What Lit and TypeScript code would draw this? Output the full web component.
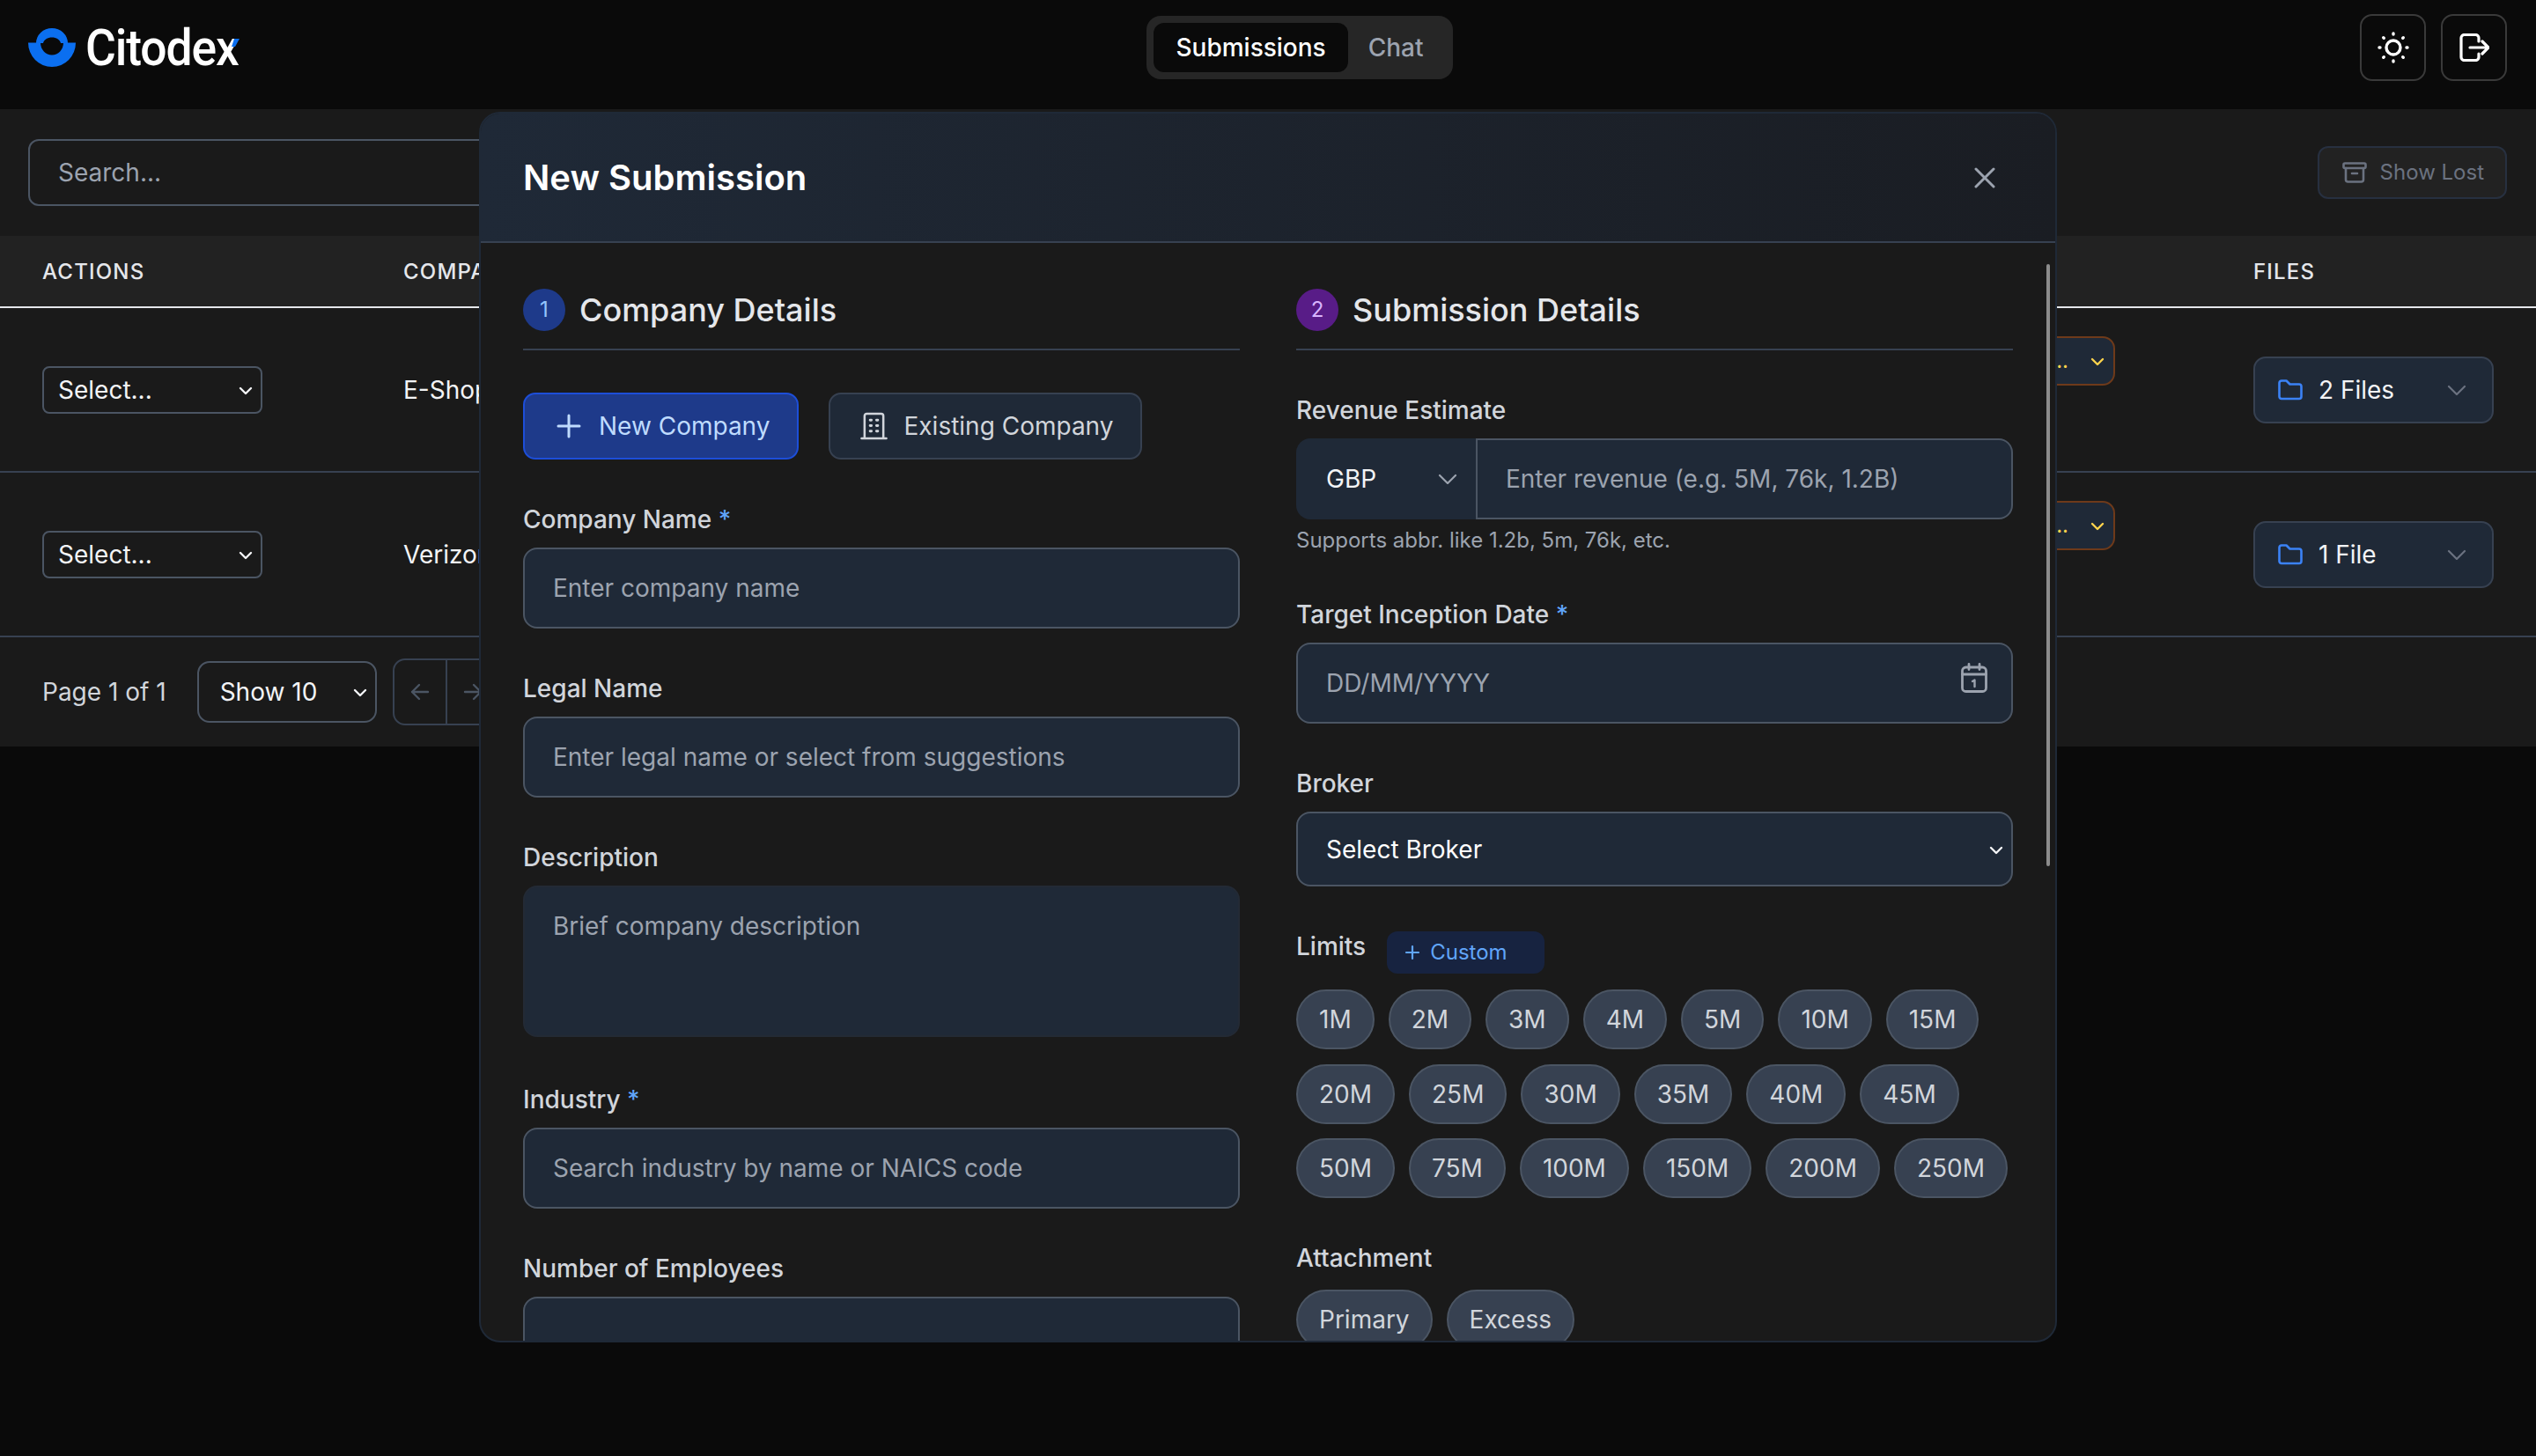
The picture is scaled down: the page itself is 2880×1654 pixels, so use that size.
import { css, html, LitElement } from "lit";
import { customElement } from "lit/decorators.js";

const chevron = html`<svg class="chev" viewBox="0 0 16 10" fill="none" stroke="currentColor" stroke-width="2.4" stroke-linecap="round" stroke-linejoin="round"><path d="M2 2l6 6 6-6" /></svg>`;
const wideChev = html`<svg class="wide-chev" viewBox="0 0 22 12" fill="none" stroke="currentColor" stroke-width="2.2" stroke-linecap="round" stroke-linejoin="round"><path d="M2 2l9 9 9-9" /></svg>`;
const folder = html`<svg class="folder" viewBox="0 0 28 24" fill="none" stroke="currentColor" stroke-width="2.6" stroke-linejoin="round"><path d="M1.5 4a2.5 2.5 0 0 1 2.5-2.5h5.5l4 4H24a2.5 2.5 0 0 1 2.5 2.5v11.500a2.500 2.500 0 0 1-2.500 2.500H4a2.500 2.500 0 0 1-2.500-2.500z" /></svg>`;

const LIMITS = ["1M", "2M", "3M", "4M", "5M", "10M", "15M", "20M", "25M", "30M", "35M", "40M", "45M", "50M", "75M", "100M", "150M", "200M", "250M"];

@customElement("app-root")
export class AppRoot extends LitElement {
    static styles = css`
        :host {
            display: block;
            min-height: 1654px;
            background: #0a0a0a;
            color: #f3f4f6;
            font-family: Inter, "Noto Sans", sans-serif;
            font-size: 28px;
            line-height: 40px;
            position: relative;
            overflow: hidden;
        }

        * {
            box-sizing: border-box;
        }

        select,
        input,
        textarea {
            font: inherit;
            color: inherit;
            appearance: none;
            outline: none;
            margin: 0;
        }

        input::placeholder,
        textarea::placeholder {
            color: #9ca3af;
            opacity: 1;
        }

        svg {
            display: block;
            flex: none;
        }

        /* top bar */
        .topbar {
            height: 124px;
            padding: 0 33px 16px 32px;
            display: flex;
            align-items: center;
            justify-content: space-between;
        }

        .logo {
            position: relative;
            display: flex;
            align-items: center;
            gap: 11px;
            width: 240px;
            height: 60px;
        }

        .logo svg {
            width: 54px;
            height: 44px;
        }

        .logo-text {
            font-family: Roboto, sans-serif;
            font-size: 58px;
            font-weight: 500;
            line-height: 60px;
            letter-spacing: -1.2px;
            color: #fff;
            transform: scaleX(0.92);
            transform-origin: left center;
        }

        .logo .tick {
            position: absolute;
            left: 231px;
            top: 20px;
            width: 9px;
            height: 9px;
        }

        .tabs {
            display: flex;
            padding: 8px;
            border-radius: 16px;
            background: #262626;
        }

        .tab {
            padding: 8px 25px 8px 23px;
            color: #9ca3af;
            font-weight: 500;
            border-radius: 12px;
        }

        .tab.on {
            padding: 8px 25px;
            color: #fff;
            background: #0a0a0a;
        }

        .top-actions {
            display: flex;
            gap: 17px;
        }

        .icon-btn {
            width: 75px;
            height: 76px;
            border: 2px solid #3a3a3a;
            border-radius: 14px;
            display: flex;
            align-items: center;
            justify-content: center;
            color: #fff;
        }

        /* list panel */
        .panel {
            background: #1a1a1a;
            height: 724px;
        }

        .filters {
            height: 144px;
            padding: 0 33px 0 32px;
            display: flex;
            align-items: center;
            justify-content: space-between;
        }

        .search {
            width: 1000px;
            height: 76px;
            padding: 0 32px;
            background: transparent;
            border: 2px solid #4b5563;
            border-radius: 12px;
        }

        .show-lost {
            height: 60px;
            padding: 0 24px 0 26px;
            display: flex;
            align-items: center;
            gap: 15px;
            font-size: 24px;
            color: #6b7280;
            background: #222;
            border: 2px solid #273040;
            border-radius: 12px;
        }

        .table-head,
        .table-row {
            display: grid;
            grid-template-columns: 410px 1fr 273px;
            padding: 0 48px;
        }

        .table-head {
            height: 82px;
            padding-top: 2px;
            align-items: center;
            background: #222;
            border-bottom: 2px solid #e5e7eb;
            font-size: 24px;
            font-weight: 500;
            letter-spacing: 1.2px;
            color: #e5e7eb;
        }

        .table-row {
            height: 187px;
            align-items: center;
            border-bottom: 2px solid #374151;
        }

        .select-wrap {
            position: relative;
            display: block;
        }

        .select-wrap .chev {
            position: absolute;
            right: 11px;
            top: 50%;
            width: 16px;
            height: 10px;
            margin-top: -4px;
            pointer-events: none;
        }

        .row-select {
            width: 250px;
        }

        .row-select select {
            display: block;
            width: 100%;
            height: 54px;
            padding: 0 16px;
            background: transparent;
            border: 2px solid #4b5563;
            border-radius: 8px;
        }

        .company {
            height: 100%;
            display: flex;
            align-items: center;
            justify-content: space-between;
            margin-right: 157px;
        }

        .status {
            align-self: flex-start;
            margin-top: 32px;
            width: 200px;
            height: 56px;
            padding-right: 51px;
            display: flex;
            align-items: center;
            justify-content: flex-end;
            position: relative;
            font-size: 24px;
            color: #fcd34d;
            background: #1f2937;
            border: 2px solid #6e3a1a;
            border-radius: 14px;
        }

        .status .chev {
            position: absolute;
            right: 10px;
            top: 22px;
            width: 16px;
            height: 10px;
        }

        .files {
            height: 76px;
            padding: 0 29px 0 26px;
            display: flex;
            align-items: center;
            background: #1f2937;
            border: 2px solid #374151;
            border-radius: 14px;
        }

        .folder {
            width: 28px;
            height: 24px;
            color: #3b82f6;
            margin-right: 18px;
        }

        .files .wide-chev {
            margin-left: auto;
            color: #6b7280;
        }

        .wide-chev {
            width: 22px;
            height: 12px;
        }

        .pagination {
            height: 124px;
            padding: 0 0 0 48px;
            display: flex;
            align-items: center;
        }

        .page-label {
            color: #d1d5db;
            margin-right: 35px;
        }

        .show-select {
            width: 204px;
        }

        .show-select select {
            display: block;
            width: 100%;
            height: 70px;
            padding: 0 24px;
            background: transparent;
            border: 2px solid #4b5563;
            border-radius: 14px;
        }

        .pager {
            margin-left: 18px;
            display: flex;
            height: 76px;
            width: 122px;
            border: 2px solid #374151;
            border-radius: 14px;
            color: #4b5563;
        }

        .pager span {
            flex: 1;
            display: flex;
            align-items: center;
            justify-content: center;
        }

        .pager span + span {
            border-left: 2px solid #374151;
        }

        /* modal */
        .modal {
            position: absolute;
            left: 544px;
            top: 127px;
            width: 1792px;
            height: 1398px;
            display: flex;
            flex-direction: column;
            overflow: hidden;
            background: #1a1a1a;
            border: 2px solid #1f2937;
            border-radius: 24px;
        }

        .modal-head {
            flex: none;
            height: 147px;
            padding: 0 48px;
            display: flex;
            align-items: center;
            justify-content: space-between;
            background: linear-gradient(to right, #1f2937, #1a1d23);
            border-bottom: 2px solid #374151;
        }

        .modal-head h2 {
            margin: 0;
            font-size: 40px;
            line-height: 56px;
            font-weight: 600;
            color: #fff;
        }

        .close {
            margin-right: 20px;
            color: #9ca3af;
        }

        .modal-body {
            flex: 1;
            min-height: 0;
            overflow: hidden;
            padding: 48px;
            display: grid;
            grid-template-columns: 1fr 1fr;
            column-gap: 64px;
            align-items: start;
        }

        .thumb {
            position: absolute;
            right: 6px;
            top: 171px;
            width: 4px;
            height: 684px;
            border-radius: 2px;
            background: #8c8c8c;
        }

        .step-head {
            display: flex;
            align-items: center;
            gap: 16px;
            padding-bottom: 16px;
            margin-bottom: 48px;
            border-bottom: 2px solid #374151;
        }

        .step-head h3 {
            margin: 0;
            font-size: 36px;
            line-height: 56px;
            font-weight: 500;
            color: #e5e7eb;
        }

        .step {
            width: 48px;
            height: 48px;
            border-radius: 50%;
            display: flex;
            align-items: center;
            justify-content: center;
            font-size: 24px;
            color: #93c5fd;
            background: #1e3a8a;
        }

        .step.purple {
            color: #d8b4fe;
            background: #581c87;
        }

        .mode {
            display: flex;
            gap: 34px;
            margin-bottom: 48px;
        }

        .mode-btn {
            height: 76px;
            padding: 0 31px 0 34px;
            display: flex;
            align-items: center;
            gap: 18px;
            color: #d1d5db;
            background: #1f2937;
            border: 2px solid #374151;
            border-radius: 14px;
        }

        .mode-btn.on {
            color: #bfdbfe;
            background: #1e3a8a;
            border-color: #1d4ed8;
        }

        .field {
            margin-bottom: 48px;
        }

        label,
        .label {
            display: block;
            margin-bottom: 12px;
            font-weight: 500;
            color: #d1d5db;
        }

        .req {
            color: #60a5fa;
        }

        .input {
            display: block;
            width: 100%;
            height: 92px;
            padding: 0 32px;
            background: #1f2937;
            border: 2px solid #4b5563;
            border-radius: 16px;
        }

        textarea.input {
            height: 172px;
            padding: 24px 32px;
            resize: none;
            border-color: #232a35;
            margin-bottom: 51px;
        }

        .field.desc {
            margin-bottom: 0;
        }

        .revenue {
            position: relative;
            display: flex;
            height: 92px;
        }

        .revenue select {
            width: 204px;
            height: 100%;
            padding: 0 34px;
            background: #1f2937;
            border: 0;
            border-radius: 16px 0 0 16px;
        }

        .revenue .wide-chev {
            position: absolute;
            left: 161px;
            top: 40px;
            color: #9ca3af;
            pointer-events: none;
        }

        .revenue input {
            flex: 1;
            min-width: 0;
            padding: 0 32px;
            background: #1f2937;
            border: 2px solid #4b5563;
            border-radius: 0 16px 16px 0;
        }

        .hint {
            margin-top: 4px;
            font-size: 24px;
            line-height: 40px;
            color: #9ca3af;
        }

        .field.rev {
            margin-bottom: 44px;
        }

        .date {
            position: relative;
        }

        .date svg {
            position: absolute;
            right: 29px;
            top: 23px;
            color: #9ca3af;
        }

        .broker select {
            height: 85px;
            color: #fff;
        }

        .limits-head {
            display: flex;
            align-items: flex-start;
            gap: 24px;
            margin-bottom: 18px;
        }

        .limits-head .label {
            margin: 0;
        }

        .custom {
            width: 179px;
            height: 48px;
            margin-top: 3px;
            padding-left: 20px;
            display: flex;
            align-items: center;
            gap: 11px;
            font-size: 24px;
            color: #60a5fa;
            background: #172340;
            border-radius: 12px;
        }

        .chips {
            display: flex;
            flex-wrap: wrap;
            gap: 16.5px 16px;
        }

        .chip {
            height: 68px;
            padding: 0 24px;
            display: flex;
            align-items: center;
            color: #d1d5db;
            background: #374151;
            border: 2px solid #4b5563;
            border-radius: 34px;
        }

        .attach .label {
            margin-bottom: 16px;
        }
    `;

    private renderRow(name: string, files: string) {
        return html`
            <div class="table-row">
                <span class="select-wrap row-select">
                    <select><option>Select...</option></select>
                    ${chevron}
                </span>
                <div class="company">
                    <span>${name}</span>
                    <div class="status">Active...${chevron}</div>
                </div>
                <div class="files">
                    ${folder}
                    <span>${files}</span>
                    ${wideChev}
                </div>
            </div>
        `;
    }

    private renderLeft() {
        return html`
            <div>
                <div class="step-head">
                    <span class="step">1</span>
                    <h3>Company Details</h3>
                </div>
                <div class="mode">
                    <div class="mode-btn on">
                        <svg width="32" height="32" viewBox="0 0 32 32" fill="none" stroke="currentColor" stroke-width="3" stroke-linecap="round"><path d="M16 4v24M4 16h24" /></svg>
                        New Company
                    </div>
                    <div class="mode-btn">
                        <svg width="31" height="32" viewBox="0 0 32 32" fill="none" stroke="currentColor" stroke-width="2.600" stroke-linecap="round" stroke-linejoin="round"><path d="M1.500 30.500h29M5 30.500V4a2.500 2.500 0 0 1 2.500-2.500h17A2.500 2.500 0 0 1 27 4v26.500" /><path d="M11.500 9h1.500M19 9h1.500M11.500 15.500h1.500M19 15.500h1.500M11.500 22h1.500M19 22h1.500" stroke-width="3" /></svg>
                        Existing Company
                    </div>
                </div>
                <div class="field">
                    <label>Company Name <span class="req">*</span></label>
                    <input class="input" placeholder="Enter company name" />
                </div>
                <div class="field">
                    <label>Legal Name</label>
                    <input class="input" placeholder="Enter legal name or select from suggestions" />
                </div>
                <div class="field desc">
                    <label>Description</label>
                    <textarea class="input" placeholder="Brief company description"></textarea>
                </div>
                <div class="field">
                    <label>Industry <span class="req">*</span></label>
                    <input class="input" placeholder="Search industry by name or NAICS code" />
                </div>
                <div class="field">
                    <label>Number of Employees</label>
                    <input class="input" />
                </div>
            </div>
        `;
    }

    private renderRight() {
        return html`
            <div>
                <div class="step-head">
                    <span class="step purple">2</span>
                    <h3>Submission Details</h3>
                </div>
                <div class="field rev">
                    <label>Revenue Estimate</label>
                    <div class="revenue">
                        <select><option>GBP</option></select>
                        ${wideChev}
                        <input placeholder="Enter revenue (e.g. 5M, 76k, 1.2B)" />
                    </div>
                    <div class="hint">Supports abbr. like 1.2b, 5m, 76k, etc.</div>
                </div>
                <div class="field">
                    <label>Target Inception Date <span class="req">*</span></label>
                    <div class="date">
                        <input class="input" placeholder="DD/MM/YYYY" />
                        <svg width="30" height="34" viewBox="0 0 30 34" fill="none" stroke="currentColor" stroke-width="2.800" stroke-linecap="round" stroke-linejoin="round"><rect x="1.500" y="5" width="27" height="27.500" rx="4" /><path d="M1.500 13h27M9 1.500v6M21 1.500v6" /><path d="M13 21l2.500-1.500V27" stroke-width="2.400" /></svg>
                    </div>
                </div>
                <div class="field broker">
                    <label>Broker</label>
                    <span class="select-wrap">
                        <select class="input"><option>Select Broker</option></select>
                        ${chevron}
                    </span>
                </div>
                <div class="field">
                    <div class="limits-head">
                        <span class="label">Limits</span>
                        <span class="custom">
                            <svg width="18" height="18" viewBox="0 0 18 18" fill="none" stroke="currentColor" stroke-width="2.200" stroke-linecap="round"><path d="M9 2v14M2 9h14" /></svg>
                            Custom
                        </span>
                    </div>
                    <div class="chips">
                        ${LIMITS.map((limit) => html`<span class="chip">${limit}</span>`)}
                    </div>
                </div>
                <div class="field attach">
                    <span class="label">Attachment</span>
                    <div class="chips">
                        <span class="chip">Primary</span>
                        <span class="chip">Excess</span>
                    </div>
                </div>
            </div>
        `;
    }

    protected render() {
        return html`
            <header class="topbar">
                <div class="logo">
                    <svg viewBox="0 0 54 44" fill="#0b6ff0">
                        <path d="M9 17A18 17 0 0 1 45 17H37C36 13 32 10.500 27 10.500S18 13 17 17Z" />
                        <path d="M0 16.500H14A13 14 0 0 0 40 16.500H54A27 27.500 0 0 1 0 16.500Z" />
                    </svg>
                    <span class="logo-text">Citodex</span>
                    <svg class="tick" viewBox="0 0 9 9" fill="#0b6ff0"><path d="M3 0H9L4 9H0Z" /></svg>
                </div>
                <nav class="tabs">
                    <span class="tab on">Submissions</span>
                    <span class="tab">Chat</span>
                </nav>
                <div class="top-actions">
                    <div class="icon-btn">
                        <svg width="48" height="48" viewBox="0 0 24 24" fill="none" stroke="currentColor" stroke-width="1.700" stroke-linecap="round"><circle cx="12" cy="12" r="4" /><path d="M12 4v.5M20 12h-.5M12 20v-.5M4 12h.5M17.650 6.350l-.3.3M17.650 17.650l-.3-.3M6.350 17.650l.3-.3M6.350 6.350l.3.3" /></svg>
                    </div>
                    <div class="icon-btn">
                        <svg width="34" height="32" viewBox="0 0 34 32" fill="none" stroke="currentColor" stroke-width="3.200" stroke-linecap="round" stroke-linejoin="round"><path d="M22 9V5a3.500 3.500 0 0 0-3.500-3.500h-13A3.500 3.500 0 0 0 2 5v22a3.500 3.500 0 0 0 3.500 3.500h13A3.500 3.500 0 0 0 22 27v-4" /><path d="M12 16h20M26 9l7 7-7 7" /></svg>
                    </div>
                </div>
            </header>

            <section class="panel">
                <div class="filters">
                    <input class="search" placeholder="Search..." />
                    <div class="show-lost">
                        <svg width="28" height="24" viewBox="0 0 28 24" fill="none" stroke="currentColor" stroke-width="2.600" stroke-linejoin="round" stroke-linecap="round"><rect x="1.500" y="1.500" width="25" height="5.500" rx="1.500" /><path d="M4 7v13a2.500 2.500 0 0 0 2.500 2.500h15A2.500 2.500 0 0 0 24 20V7M11 13h6" /></svg>
                        Show Lost
                    </div>
                </div>
                <div class="table-head">
                    <span>ACTIONS</span>
                    <span>COMPANY</span>
                    <span>FILES</span>
                </div>
                ${this.renderRow("E-Shop", "2 Files")}
                ${this.renderRow("Verizon", "1 File")}
                <div class="pagination">
                    <span class="page-label">Page 1 of 1</span>
                    <span class="select-wrap show-select">
                        <select><option>Show 10</option></select>
                        ${chevron}
                    </span>
                    <div class="pager">
                        <span><svg width="22" height="20" viewBox="0 0 22 20" fill="none" stroke="currentColor" stroke-width="2.400" stroke-linecap="round" stroke-linejoin="round"><path d="M20 10H2M10 2l-8 8 8 8" /></svg></span>
                        <span><svg width="22" height="20" viewBox="0 0 22 20" fill="none" stroke="currentColor" stroke-width="2.400" stroke-linecap="round" stroke-linejoin="round"><path d="M2 10h18M12 2l8 8-8 8" /></svg></span>
                    </div>
                </div>
            </section>

            <div class="modal">
                <div class="modal-head">
                    <h2>New Submission</h2>
                    <svg class="close" width="24" height="24" viewBox="0 0 24 24" fill="none" stroke="currentColor" stroke-width="3" stroke-linecap="round"><path d="M2 2l20 20M22 2L2 22" /></svg>
                </div>
                <div class="modal-body">
                    ${this.renderLeft()}
                    ${this.renderRight()}
                </div>
                <div class="thumb"></div>
            </div>
        `;
    }
}
